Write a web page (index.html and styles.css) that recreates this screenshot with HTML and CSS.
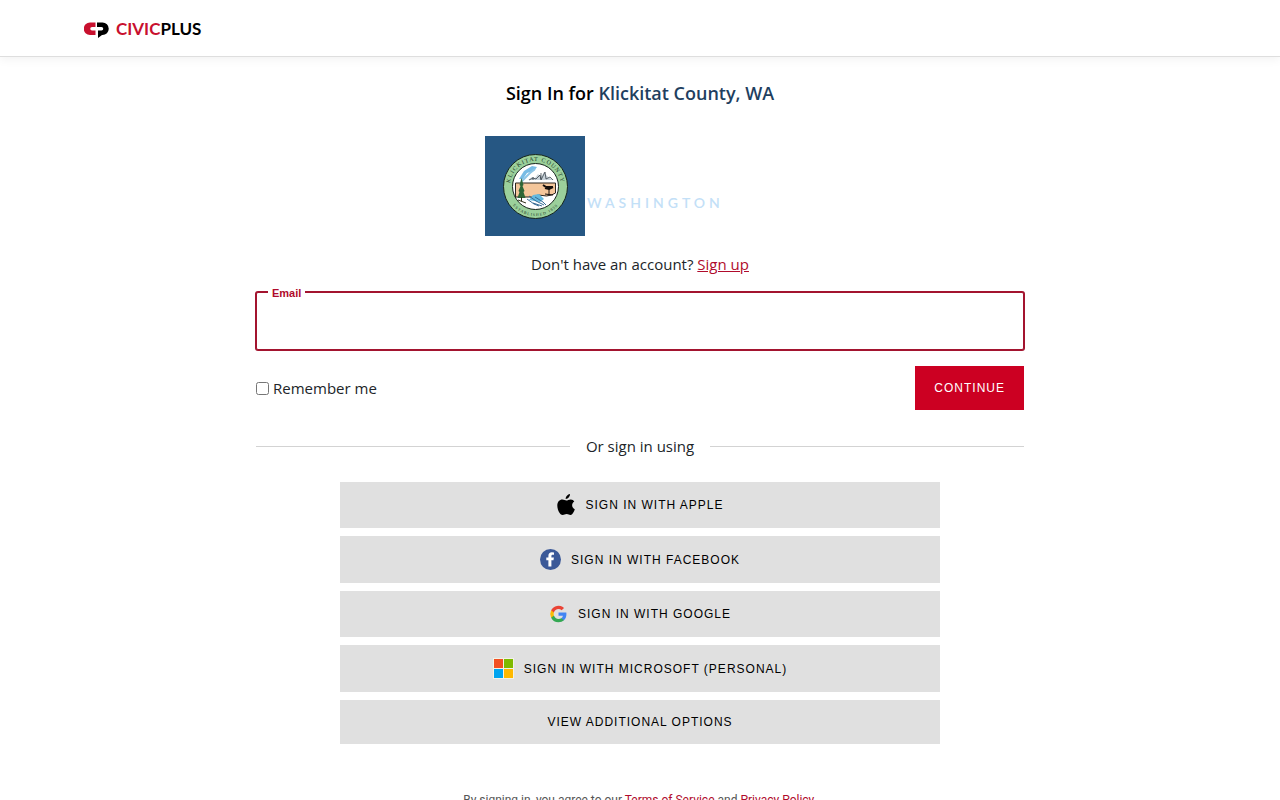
FILE: index.html
```html
<!DOCTYPE html>
<html lang="en">
<head>
    <meta charset="UTF-8">
    <meta name="viewport" content="width=device-width, initial-scale=1.0">
    <title>Sign In - CivicPlus</title>
    <link rel="stylesheet" href="styles.css">
</head>
<body>
    <header class="navbar">
        <a class="brand" href="#" aria-label="CivicPlus">
            <svg width="25" height="16" viewBox="0 0 25 16" aria-hidden="true">
                <path fill="#c8102e" d="M6 .500h5.500v4.500H8a1.500 1.500 0 0 0 0 3.500h3.500V13H6A6 6 0 0 1 6 .500z"/>
                <path fill="#000" d="M13 .500h5.500a6 6 0 0 1 0 12.500H18l-4 3V8.500h3.500a1.500 1.500 0 0 0 0-3.500H13z"/>
            </svg>
            <span class="brand-name"><span class="brand-red">CIVIC</span>PLUS</span>
        </a>
    </header>

    <main class="container">
        <h1 class="title">Sign In for <span class="org">Klickitat County, WA</span></h1>

        <svg class="org-logo" width="310" height="100" viewBox="0 0 310 100" role="img" aria-label="Klickitat County Washington">
            <defs>
                <path id="arc-top" d="M26.300 58.500A25.500 25.500 0 1 1 74.700 58.500"/>
                <path id="arc-bottom" d="M25.100 65.500A29.500 29.500 0 0 0 75.900 65.500"/>
            </defs>
            <rect width="100" height="100" fill="#265783"/>
            <circle cx="50.500" cy="50.500" r="32" fill="#9bd09b" stroke="#17251c"/>
            <circle cx="50.500" cy="50.500" r="23" fill="#fff" stroke="#17251c"/>
            <path fill="#78bce5" d="M34 43l5-8 8-5 5 1-3 4-7 2-4 6z"/>
            <path fill="none" stroke="#8dc5e6" stroke-width="2" d="M37 45l8-8 5-4"/>
            <path fill="#c9d3da" d="M43 44l4-3 3 1 3-4 3 3 3-5 3 4 3 2 4 2z"/>
            <path fill="none" stroke="#26303a" stroke-width=".7" d="M44 44l4-2 3 1 4-4 1 5 4-8 1 7 4-2 3 3M48 41v3M56 37v6"/>
            <path fill="#f4c69a" stroke="#2b2721" d="M30.500 47h40v10l-4 2-5 1-8-1-7 2h-16z"/>
            <path fill="none" stroke="#17100d" stroke-width="2" d="M58 49l3 2h7M60 52l4 1 4-2"/>
            <path fill="none" stroke="#17100d" d="M64 52v6M60 58l8 1"/>
            <path fill="#63b9df" d="M44 64l4-5 6-1 5 5-4 3z"/>
            <path fill="none" stroke="#376b94" stroke-width="1" d="M42 63l7 5 5 2M44 60l7 5 8 4M50 61l8 5 3 3M48 67l9 3"/>
            <path fill="#2e6636" d="M36.500 42l2 7-1 1 2 5-1 1 2 6h-8l2-6-1-1 2-5-1-1z"/>
            <path stroke="#32321d" d="M36.500 61v4M33 64l8 3"/>
            <text class="seal-text"><textPath href="#arc-top" startOffset="50%">KLICKITAT COUNTY</textPath></text>
            <text class="seal-text seal-small"><textPath href="#arc-bottom" startOffset="50%">ESTABLISHED 1859</textPath></text>
            <text class="state" x="102" y="72">WASHINGTON</text>
        </svg>

        <p class="signup">Don't have an account? <a href="#">Sign up</a></p>

        <form class="signin-form" onsubmit="event.preventDefault();">
            <div class="field">
                <label for="email">Email</label>
                <input type="email" id="email" name="email">
            </div>
            <div class="form-row">
                <label class="remember" for="remember">
                    <input type="checkbox" id="remember" name="remember">
                    Remember me
                </label>
                <button class="btn btn-primary" type="submit">Continue</button>
            </div>
        </form>

        <div class="divider"><span>Or sign in using</span></div>

        <div class="providers">
            <button class="btn" type="button">
                <svg width="19" height="22" viewBox="0 0 19 22" aria-hidden="true">
                    <path d="M14 0c.2 2-1.500 4.800-4.300 5C9.400 2.800 11.500.500 14 0zM18.300 7.500c-3.200 2-2.700 6.300.5 7.700-.8 2.400-2.400 5.700-4.200 5.800-1.500.1-2-.9-3.900-.9s-2.500.9-4 .9C3.800 21 1.300 15.700 1.300 11.800c0-4 2.400-6.200 5-6.200 1.700 0 2.900 1 4.100 1 1.100 0 2.500-1.200 4.500-1.100 1.500.1 2.600.7 3.400 2z"/>
                </svg>
                Sign in with Apple
            </button>
            <button class="btn" type="button">
                <svg width="21" height="23" viewBox="0 0 21 23" aria-hidden="true">
                    <circle cx="10.500" cy="11.500" r="10.500" fill="#3b5998"/>
                    <path fill="#fff" d="M8.400 18.500v-6.200H6.300V9.500h2.100V7.800c0-2.400 1.300-3.600 3.400-3.600l2.200.2v2.400h-1.300c-1 0-1.300.6-1.300 1.200v1.500h2.500l-.4 2.800h-2.100v6.200z"/>
                </svg>
                Sign in with Facebook
            </button>
            <button class="btn" type="button">
                <svg width="19" height="22" viewBox="-1 -3 20 24" aria-hidden="true">
                    <path fill="#4285f4" d="M17.640 9.200c0-.64-.06-1.250-.16-1.840H9v3.480h4.840a4.140 4.140 0 0 1-1.800 2.720v2.260h2.920c1.700-1.570 2.680-3.880 2.680-6.620z"/>
                    <path fill="#34a853" d="M9 18c2.430 0 4.470-.8 5.960-2.180l-2.920-2.260c-.8.540-1.840.86-3.040.86-2.340 0-4.330-1.580-5.040-3.710H.96v2.330A9 9 0 0 0 9 18z"/>
                    <path fill="#fbbc05" d="M3.960 10.710a5.400 5.400 0 0 1 0-3.420V4.960H.96a9 9 0 0 0 0 8.080z"/>
                    <path fill="#ea4335" d="M9 3.580c1.320 0 2.500.45 3.440 1.350l2.580-2.590A9 9 0 0 0 .96 4.960l3 2.330C4.670 5.160 6.660 3.580 9 3.580z"/>
                </svg>
                Sign in with Google
            </button>
            <button class="btn" type="button">
                <svg width="21" height="23" viewBox="0 0 21 23" aria-hidden="true">
                    <path fill="#f3f3e8" d="M0 1h21v21H0z"/>
                    <path fill="#f25022" d="M1 2h9v9H1z"/>
                    <path fill="#7fba00" d="M11 2h9v9h-9z"/>
                    <path fill="#00a4ef" d="M1 12h9v9H1z"/>
                    <path fill="#ffb900" d="M11 12h9v9h-9z"/>
                </svg>
                Sign in with Microsoft (Personal)
            </button>
            <button class="btn" type="button">View additional options</button>
        </div>

        <p class="terms">By signing in, you agree to our <a href="#">Terms of Service</a> and <a href="#">Privacy Policy</a>.</p>
    </main>
</body>
</html>
```
FILE: styles.css
```css
* {
    box-sizing: border-box;
}
body {
    margin: 0;
    background-color: #fff;
    color: #212529;
    font-family: "Segoe UI", "Open Sans", "Noto Sans", sans-serif;
    font-size: 15px;
    line-height: 24px;
}
a {
    color: #b00b2c;
}
.navbar {
    display: flex;
    align-items: center;
    height: 57px;
    padding: 2px 84px 0;
    border-bottom: 1px solid #dedede;
    box-shadow: 0 2px 10px rgba(0, 0, 0, 0.06);
}
.brand {
    display: flex;
    align-items: center;
    gap: 7px;
    color: #000;
    text-decoration: none;
}
.brand svg {
    margin-top: 2px;
}
.brand-name {
    font-family: Lato, sans-serif;
    font-size: 17px;
    font-weight: bold;
}
.brand-red {
    color: #c8102e;
}

.container {
    display: flex;
    flex-direction: column;
    align-items: center;
    width: 60%;
    margin: 0 auto;
    padding: 24px 0;
}
.title {
    margin: 0 0 31px;
    color: #000;
    font-size: 18px;
    font-weight: 600;
}
.org {
    color: #1f3f5f;
}
.seal-text {
    fill: #17341f;
    font-family: "Liberation Serif", serif;
    font-size: 6px;
    letter-spacing: 1px;
    text-anchor: middle;
}
.seal-small {
    font-size: 4px;
}
.state {
    fill: #c3e0f7;
    font-family: Lato, sans-serif;
    font-size: 14px;
    font-weight: 600;
    letter-spacing: 4px;
}
.signup {
    margin: 16px 0;
}

.signin-form {
    width: 100%;
}
.field {
    position: relative;
}
.field label {
    position: absolute;
    top: -6px;
    left: 12px;
    padding: 0 4px;
    background-color: #fff;
    color: #b00b2c;
    font-family: Arial, "Liberation Sans", sans-serif;
    font-size: 11px;
    font-weight: bold;
    line-height: 14px;
}
.field input {
    display: block;
    width: 100%;
    padding: 16px;
    border: 1px solid #a3142f;
    border-radius: 2px;
    box-shadow: 0 0 0 1px #a3142f;
    outline: none;
    font-family: inherit;
    font-size: 16px;
    line-height: 24px;
}
.form-row {
    display: flex;
    justify-content: space-between;
    align-items: center;
    margin-top: 16px;
}
.remember {
    display: flex;
    align-items: center;
    gap: 4px;
}
.remember input {
    width: 13px;
    height: 13px;
    margin: 0;
}

.btn {
    display: flex;
    justify-content: center;
    align-items: center;
    gap: 10px;
    padding: 12px 19px;
    border: 0;
    background-color: #e0e0e0;
    color: #000;
    font-family: Arial, "Liberation Sans", sans-serif;
    font-size: 12px;
    line-height: 20px;
    letter-spacing: 1px;
    text-transform: uppercase;
    cursor: pointer;
}
.btn-primary {
    background-color: #cc0022;
    color: #fff;
    font-weight: 500;
}
.divider {
    display: flex;
    align-items: center;
    gap: 16px;
    width: 100%;
    margin: 24px 0;
}
.divider::before,
.divider::after {
    content: "";
    flex: 1;
    height: 1px;
    background-color: #d3d3d3;
}
.providers {
    display: flex;
    flex-direction: column;
    gap: 8px;
    width: 100%;
    max-width: 600px;
}
.terms {
    margin: 46px 0 0;
    color: #555;
    font-family: Roboto, sans-serif;
    font-size: 12px;
    line-height: 20px;
}
.terms a {
    text-decoration: none;
}
```
